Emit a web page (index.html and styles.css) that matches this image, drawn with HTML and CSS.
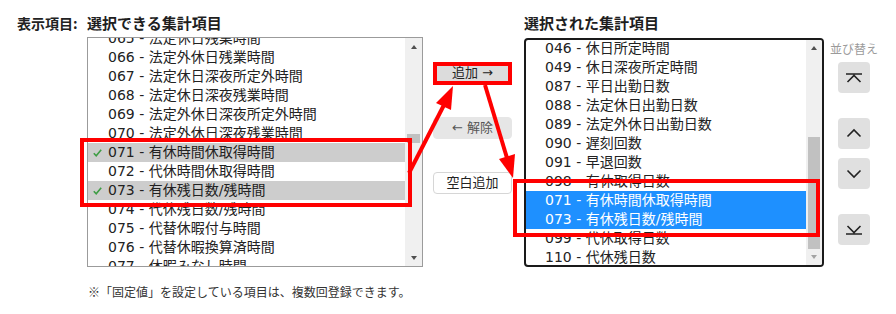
FILE: index.html
```html
<!DOCTYPE html>
<html lang="ja">
<head>
<meta charset="utf-8">
<link rel="stylesheet" href="styles.css">
</head>
<body>
<div class="page">
  <div class="row">
    <div class="label">表示項目:</div>
    <section class="panel panel-left">
      <h2 class="title">選択できる集計項目</h2>
      <div class="listbox listbox-left">
        <ul class="items items-left">
          <li class="item">065 - 法定休日残業時間</li>
          <li class="item">066 - 法定外休日残業時間</li>
          <li class="item">067 - 法定休日深夜所定外時間</li>
          <li class="item">068 - 法定休日深夜残業時間</li>
          <li class="item">069 - 法定外休日深夜所定外時間</li>
          <li class="item">070 - 法定外休日深夜残業時間</li>
          <li class="item checked"><svg class="check" width="9" height="8" viewBox="0 0 9 8"><polyline points="0.8,4.2 3.2,6.8 8.2,0.8" fill="none" stroke="#3f9d45" stroke-width="1.6"/></svg>071 - 有休時間休取得時間</li>
          <li class="item">072 - 代休時間休取得時間</li>
          <li class="item checked"><svg class="check" width="9" height="8" viewBox="0 0 9 8"><polyline points="0.8,4.2 3.2,6.8 8.2,0.8" fill="none" stroke="#3f9d45" stroke-width="1.6"/></svg>073 - 有休残日数/残時間</li>
          <li class="item">074 - 代休残日数/残時間</li>
          <li class="item">075 - 代替休暇付与時間</li>
          <li class="item">076 - 代替休暇換算済時間</li>
          <li class="item">077 - 休暇みなし時間</li>
        </ul>
        <div class="sb">
          <span class="sb-arrow up"></span>
          <div class="sb-track"><div class="sb-thumb thumb-left"></div></div>
          <span class="sb-arrow down"></span>
        </div>
      </div>
    </section>
    <div class="actions">
      <button class="btn btn-add">追加 →</button>
      <button class="btn btn-remove">← 解除</button>
      <button class="btn btn-blank">空白追加</button>
    </div>
    <section class="panel panel-right">
      <h2 class="title">選択された集計項目</h2>
      <div class="listbox listbox-right">
        <ul class="items items-right">
          <li class="item">046 - 休日所定時間</li>
          <li class="item">049 - 休日深夜所定時間</li>
          <li class="item">087 - 平日出勤日数</li>
          <li class="item">088 - 法定休日出勤日数</li>
          <li class="item">089 - 法定外休日出勤日数</li>
          <li class="item">090 - 遅刻回数</li>
          <li class="item">091 - 早退回数</li>
          <li class="item">098 - 有休取得日数</li>
          <li class="item selected">071 - 有休時間休取得時間</li>
          <li class="item selected">073 - 有休残日数/残時間</li>
          <li class="item">099 - 代休取得日数</li>
          <li class="item">110 - 代休残日数</li>
        </ul>
        <div class="sb">
          <span class="sb-arrow up"></span>
          <div class="sb-track"><div class="sb-thumb thumb-right"></div></div>
          <span class="sb-arrow down disabled"></span>
        </div>
      </div>
    </section>
    <div class="sort">
      <div class="sort-label">並び替え</div>
      <button class="sbtn sbtn-top"><svg width="32" height="31" viewBox="0 0 32 31"><path d="M8 12H24M9.5 20L16 13.5L22.5 20" fill="none" stroke="#222" stroke-width="1.6"/></svg></button>
      <button class="sbtn sbtn-up"><svg width="32" height="31" viewBox="0 0 32 31"><path d="M9.5 18.5L16 12L22.5 18.5" fill="none" stroke="#222" stroke-width="1.6"/></svg></button>
      <button class="sbtn sbtn-down"><svg width="32" height="31" viewBox="0 0 32 31"><path d="M9.5 12.5L16 19L22.5 12.5" fill="none" stroke="#222" stroke-width="1.6"/></svg></button>
      <button class="sbtn sbtn-bottom"><svg width="32" height="31" viewBox="0 0 32 31"><path d="M8 20H24M9.5 12L16 18.5L22.5 12" fill="none" stroke="#222" stroke-width="1.6"/></svg></button>
    </div>
  </div>
  <p class="note">※「固定値」を設定している項目は、複数回登録できます。</p>
  <svg class="annot" width="896" height="314" viewBox="0 0 896 314">
    <g fill="none" stroke="#ff0000" stroke-width="4">
      <rect x="82" y="140" width="328" height="65"/>
      <rect x="435" y="64" width="75" height="19"/>
      <rect x="515" y="181" width="303" height="54"/>
      <line x1="409" y1="173" x2="445" y2="103"/>
      <line x1="485" y1="85" x2="507" y2="158"/>
    </g>
    <g fill="#ff0000">
      <polygon points="453,86 436,103 451,110"/>
      <polygon points="513,178 499,159 515,154"/>
    </g>
  </svg>
</div>
</body>
</html>
```
FILE: styles.css
```css
* { box-sizing: border-box; }
html, body { margin: 0; padding: 0; background: #fff; }
body { font-family: "Noto Sans CJK JP", sans-serif; color: #222; }

.page { position: relative; width: 896px; height: 314px; overflow: hidden; }

.row { display: flex; align-items: flex-start; padding: 13px 0 0 17px; }

.label { width: 70px; font-weight: bold; font-size: 14px; line-height: 20px; }

.title { margin: 0 0 4px; font-size: 15px; line-height: 20px; font-weight: bold; color: #1e1e1e; }

.panel-left { width: 336px; }
.panel-right { width: 300px; }
.panel-right .title { margin-bottom: 5px; }

.listbox { display: flex; overflow: hidden; background: #fff; }
.listbox-left { height: 230px; border: 1px solid #9b9b9b; }
.listbox-right { height: 229px; border: 2px solid #1a1a1a; border-radius: 4px; }

.items { flex: 1; margin: 0; padding: 0; list-style: none; overflow: hidden;
  font-family: "DejaVu Sans", "Noto Sans CJK JP", sans-serif; font-size: 14px; }
.items-left { margin-top: -9px; }
.items-right { margin-top: -1px; }

.item { position: relative; height: 19px; line-height: 19px; white-space: nowrap; color: #222; }
.items-left .item { padding-left: 20px; }
.items-right .item { padding-left: 19px; }
.item.checked { background: #cdcdcd; }
.item.selected { background: #1e90ff; color: #fff; }
.check { position: absolute; left: 5px; top: 6px; }

.sb { width: 16px; display: flex; flex-direction: column; background: #f0f0f0; }
.listbox-left .sb { width: 17px; }
.sb-arrow { height: 17px; display: flex; align-items: center; justify-content: center; }
.sb-arrow::before { content: ""; border-left: 3.5px solid transparent; border-right: 3.5px solid transparent; }
.sb-arrow.up::before { border-bottom: 4px solid #505050; }
.sb-arrow.down::before { border-top: 4px solid #505050; }
.sb-arrow.down.disabled::before { border-top-color: #a3a3a3; }
.sb-track { flex: 1; padding: 0 2px; }
.sb-thumb { background: #c1c1c1; }
.thumb-left { margin-top: 79px; height: 9px; }
.thumb-right { margin-top: 81px; height: 112px; }

.actions { width: 101px; padding: 49px 0 0 10px; display: flex; flex-direction: column; gap: 33px; }
.btn { width: 79px; height: 22px; padding: 0; border-radius: 4px; font-family: "DejaVu Sans", "Noto Sans CJK JP", sans-serif; font-size: 13px; line-height: 20px; }
.btn-add { background: #dcdcdc; border: 1px solid #d0d0d0; color: #222; }
.btn-remove { background: #e6e6e6; border: 1px solid #e6e6e6; color: #555; }
.btn-blank { background: #fff; border: 1px solid #d6d6d6; color: #222; }

.sort { width: 60px; padding-top: 28px; display: flex; flex-direction: column; align-items: center; }
.sort-label { font-size: 12px; line-height: 16px; color: #9a9a9a; margin-bottom: 5px; }
.sbtn { width: 32px; height: 31px; padding: 0; border: 0; border-radius: 4px; background: #e0e0e0; display: block; }
.sbtn svg { display: block; }
.sbtn-up { margin-top: 25px; }
.sbtn-down { margin-top: 9px; }
.sbtn-bottom { margin-top: 25px; }

.note { margin: 17px 0 0; padding-left: 88px; font-size: 12px; line-height: 16px; color: #333; }

.annot { position: absolute; left: 0; top: 0; pointer-events: none; }
```
